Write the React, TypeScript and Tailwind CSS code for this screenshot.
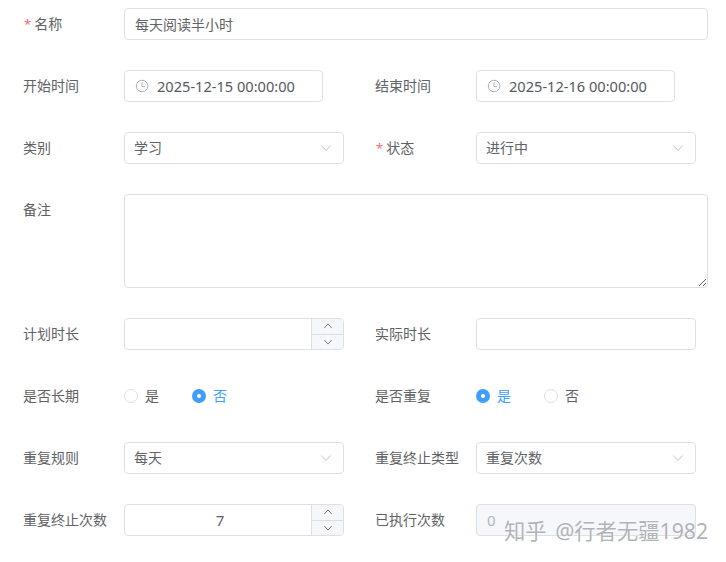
import React from 'react'

const labelCls = 'w-[100px] shrink-0 text-sm text-[#606266] leading-8 -ml-px mr-px'
const boxCls = 'h-8 border border-[#dcdfe6] rounded-[4px] text-sm text-[#606266] outline-none'

const Label = ({ text, required }: { text: string; required?: boolean }) => (
    <div className={labelCls}>
        {required && <span className="text-[#f56c6c] mr-[3px] ml-px text-[13px]">*</span>}
        {text}
    </div>
)

const Chevron = ({ up, className }: { up?: boolean; className?: string }) => (
    <svg viewBox="0 0 12 12" className={className} fill="none" stroke="currentColor" strokeWidth="1">
        <path d={up ? 'M1.5 8.5 6 3.5l4.5 5' : 'M1.5 3.5 6 8.5l4.5-5'} />
    </svg>
)

const Clock = () => (
    <svg viewBox="0 0 14 14" className="w-[14px] h-[14px] text-[#b0b4bc]" fill="none" stroke="currentColor" strokeWidth="1">
        <circle cx="7" cy="7" r="5.75" />
        <path d="M7 3.5V7.5H10" />
    </svg>
)

const DateBox = ({ value }: { value: string }) => (
    <div className={`${boxCls} bg-white w-[199px] flex items-center pl-[10px] gap-[8px]`}>
        <Clock />
        <span className="text-[14.6px] text-[#55585e]">{value}</span>
    </div>
)

const Select = ({ value }: { value: string }) => (
    <div className={`${boxCls} bg-white w-[220px] flex items-center justify-between pl-[10px] pr-[11px]`}>
        <span className="-ml-px">{value}</span>
        <Chevron className="w-3 h-3 text-[#c0c4cc]" />
    </div>
)

const NumberBox = ({ value }: { value?: string }) => (
    <div className={`${boxCls} bg-white w-[220px] flex overflow-hidden`}>
        <div className="flex-1 text-center pl-1 leading-[30px] text-[15px]">{value}</div>
        <div className="w-[32px] border-l border-[#dcdfe6] bg-[#f5f7fa] flex flex-col text-[#606266]">
            <div className="flex-1 flex items-center justify-center border-b border-[#dcdfe6]">
                <Chevron up className="w-[10px] h-[10px]" />
            </div>
            <div className="flex-1 flex items-center justify-center">
                <Chevron className="w-[10px] h-[10px]" />
            </div>
        </div>
    </div>
)

const Radio = ({ text, checked }: { text: string; checked?: boolean }) => (
    <div className="flex items-center gap-[7px] w-[68px]">
        {checked ? (
            <span className="w-[14px] h-[14px] rounded-full bg-[#409eff] flex items-center justify-center">
                <span className="w-1 h-1 rounded-full bg-white" />
            </span>
        ) : (
            <span className="w-[14px] h-[14px] rounded-full border border-[#dcdfe6] bg-white" />
        )}
        <span className={checked ? 'text-sm text-[#409eff]' : 'text-sm text-[#606266]'}>{text}</span>
    </div>
)

const Row = ({ children }: { children: React.ReactNode }) => <div className="flex">{children}</div>

const Cell = ({ children }: { children: React.ReactNode }) => <div className="flex w-[352px] shrink-0">{children}</div>

const App = () => {
    return (
        <div
            className="relative w-[726px] h-[562px] overflow-hidden bg-white pt-2 pl-6"
            style={{ fontFamily: '"Noto Sans", "Noto Sans CJK SC", sans-serif' }}
        >
            <div className="flex flex-col gap-[30px]">
                <Row>
                    <Label text="名称" required />
                    <input readOnly value="每天阅读半小时" className={`${boxCls} bg-white w-[584px] px-[10px]`} />
                </Row>
                <Row>
                    <Cell>
                        <Label text="开始时间" />
                        <DateBox value="2025-12-15 00:00:00" />
                    </Cell>
                    <Cell>
                        <Label text="结束时间" />
                        <DateBox value="2025-12-16 00:00:00" />
                    </Cell>
                </Row>
                <Row>
                    <Cell>
                        <Label text="类别" />
                        <Select value="学习" />
                    </Cell>
                    <Cell>
                        <Label text="状态" required />
                        <Select value="进行中" />
                    </Cell>
                </Row>
                <Row>
                    <Label text="备注" />
                    <textarea readOnly className="w-[584px] h-[94px] border border-[#dcdfe6] rounded-[4px] bg-white outline-none resize-y" />
                </Row>
                <Row>
                    <Cell>
                        <Label text="计划时长" />
                        <NumberBox />
                    </Cell>
                    <Cell>
                        <Label text="实际时长" />
                        <div className={`${boxCls} bg-white w-[220px]`} />
                    </Cell>
                </Row>
                <Row>
                    <Cell>
                        <Label text="是否长期" />
                        <div className="flex h-8 items-center">
                            <Radio text="是" />
                            <Radio text="否" checked />
                        </div>
                    </Cell>
                    <Cell>
                        <Label text="是否重复" />
                        <div className="flex h-8 items-center">
                            <Radio text="是" checked />
                            <Radio text="否" />
                        </div>
                    </Cell>
                </Row>
                <Row>
                    <Cell>
                        <Label text="重复规则" />
                        <Select value="每天" />
                    </Cell>
                    <Cell>
                        <Label text="重复终止类型" />
                        <Select value="重复次数" />
                    </Cell>
                </Row>
                <Row>
                    <Cell>
                        <Label text="重复终止次数" />
                        <NumberBox value="7" />
                    </Cell>
                    <Cell>
                        <Label text="已执行次数" />
                        <div className={`${boxCls} bg-[#f5f7fa] text-[#b4b8c0] text-[15px] pl-[10px] w-[220px] leading-[30px]`}>0</div>
                    </Cell>
                </Row>
            </div>
            {/* watermark sits over the last row */}
            <div className="absolute left-[504px] top-[517px] text-[21.3px] leading-7 whitespace-nowrap text-[#b0b4b9] [text-shadow:0_0_2px_#ffffff]">
                知乎<span className="ml-[3px]"> </span>@行者无疆1982
            </div>
        </div>
    )
}

export default App
